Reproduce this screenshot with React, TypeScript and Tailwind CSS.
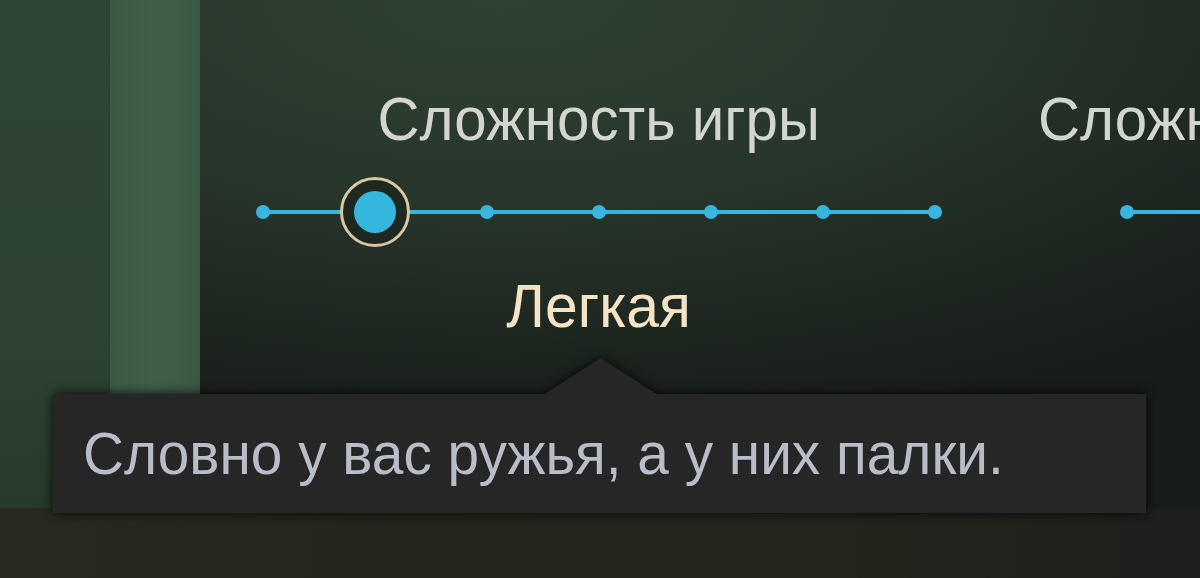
import React from "react";

const FONT = { fontFamily: '"Liberation Sans", Arial, sans-serif' };

function Dot() {
  return <span className="block h-[14px] w-[14px] rounded-full bg-[#35b6de]" />;
}

function Knob() {
  return (
    <span className="flex h-[70px] w-[70px] items-center justify-center rounded-full border-[3px] border-[#d8c7a0] bg-[#1e2820]">
      <span className="block h-[42px] w-[42px] rounded-full bg-[#35b6de]" />
    </span>
  );
}

function Slider({ steps, value }: { steps: number; value: number }) {
  return (
    <div className="relative flex h-[70px] w-[686px] items-center justify-between">
      <div className="absolute left-[7px] right-[7px] top-1/2 h-[4px] -translate-y-1/2 bg-[#35b6de]" />
      {Array.from({ length: steps }).map((_, i) => (
        <div key={i} className="relative flex h-[70px] w-[14px] items-center justify-center">
          {i === value ? (
            <span className="absolute">
              <Knob />
            </span>
          ) : (
            <Dot />
          )}
        </div>
      ))}
    </div>
  );
}

function Setting({ title, value, label }: { title: string; value: number; label?: string }) {
  return (
    <div className="flex w-[700px] shrink-0 flex-col items-center">
      <div className="h-[70px] whitespace-nowrap text-[61px] leading-[70px] text-[#d3d5d0]" style={FONT}>
        <span className="inline-block scale-x-[0.955]">{title}</span>
      </div>
      <div className="mt-[23px]">
        <Slider steps={7} value={value} />
      </div>
      {label && (
        <div className="mt-[24px] h-[70px] whitespace-nowrap text-[61px] leading-[70px] text-[#f4e4c4]" style={FONT}>
          <span className="inline-block scale-x-[0.965]">{label}</span>
        </div>
      )}
    </div>
  );
}

export default function App() {
  return (
    <div className="relative h-[578px] w-[1200px] overflow-hidden bg-[#1d221d]">
      {/* backdrop */}
      <div className="flex h-[508px] w-full">
        <div className="h-full w-[110px] shrink-0 bg-[linear-gradient(180deg,#2f4533_0%,#2d4231_70%,#283a2b_100%)]" />
        <div className="h-full w-[90px] shrink-0 bg-[linear-gradient(90deg,#3c5a43_0%,#41604a_50%,#3b5842_100%)]" />
        <div className="relative h-full min-w-0 flex-1 overflow-hidden bg-[radial-gradient(ellipse_110%_90%_at_30%_0%,#2f4232_0%,#27352b_45%,#1c231e_80%,#181c19_100%)]">
          <div className="flex gap-[164px] pl-[49px] pt-[84px]">
            <Setting title="Сложность игры" value={1} label="Легкая" />
            <Setting title="Сложность исследования мира" value={3} />
          </div>
        </div>
      </div>
      <div className="h-[70px] w-full bg-[linear-gradient(90deg,#282a1f_0%,#24261d_40%,#24251c_70%,#1c1f1c_100%)]" />

      {/* tooltip */}
      <div className="absolute left-[53px] top-[358px] w-[1093px] drop-shadow-[0_0_6px_rgba(0,0,0,0.85)]">
        <div className="flex justify-center">
          <div className="ml-[2px] h-[36px] w-[112px] bg-[#262626] [clip-path:polygon(50%_0,100%_100%,0_100%)]" />
        </div>
        <div className="flex h-[119px] items-center bg-[#262626] pl-[30px]">
          <span className="inline-block origin-left scale-x-[0.946] whitespace-nowrap text-[60px] leading-none text-[#b9bdc7]" style={FONT}>
            Словно у вас ружья, а у них палки.
          </span>
        </div>
      </div>
    </div>
  );
}
